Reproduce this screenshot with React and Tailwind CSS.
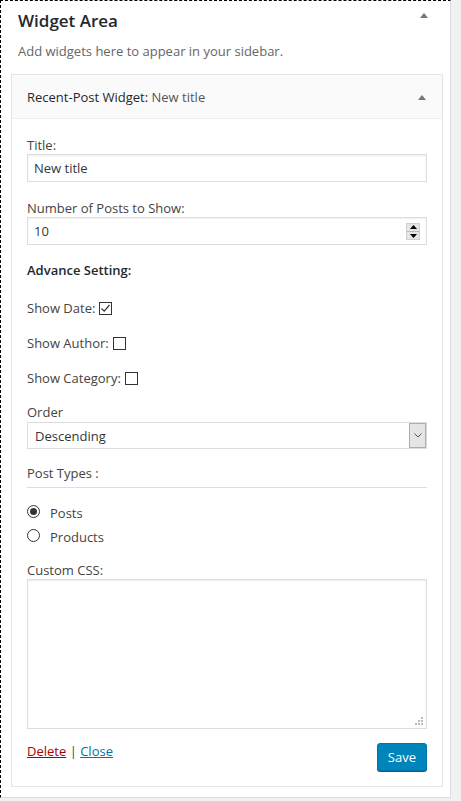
import React from 'react';

const font = { fontFamily: '"Open Sans", "Noto Sans", sans-serif' };

const UpArrow = ({ className }) => (
  <svg className={className} width="8" height="5" viewBox="0 0 8 5">
    <path d="M0 5 L4 0 L8 5 Z" fill="#72777c" />
  </svg>
);

const Check = ({ checked }) => (
  <span className="inline-flex w-[13px] h-[13px] border border-[#333] bg-white items-center justify-center">
    {checked && (
      <svg width="11" height="11" viewBox="0 0 11 11">
        <path d="M1.5 5.5 L4.2 8.2 L9.5 2" stroke="#333" strokeWidth="1.2" fill="none" />
      </svg>
    )}
  </span>
);

const Radio = ({ checked }) => (
  <span className="mt-[1px] inline-flex w-[13px] h-[13px] rounded-full border border-[#333] bg-white items-center justify-center">
    {checked && <span className="w-[7px] h-[7px] rounded-full bg-[#333]" />}
  </span>
);

const App = () => {
  return (
    <div
      className="w-[461px] h-[801px] bg-[#f1f1f1] text-[13px] text-[#444]"
      style={font}
    >
      {/* Sidebar panel */}
      <div className="w-[451px] h-[798px] bg-white border [border-style:dashed_solid_solid_dashed] [border-color:#000_#dcdcdc_#dcdcdc_#000] flex flex-col">
        <div className="flex justify-between pl-[17px] pr-[22px] pt-[8px]">
          <h2 className="text-[17px] font-semibold text-[#23282d] leading-[24px]">Widget Area</h2>
          <UpArrow className="mt-[4px]" />
        </div>
        <p className="pl-[17px] mt-[9px] text-[#666] leading-[18px]">
          Add widgets here to appear in your sidebar.
        </p>

        {/* Widget box */}
        <div className="ml-[10px] mr-[7px] mt-[14px] border border-[#e5e5e5] flex-1 flex flex-col">
          <div className="h-[44px] bg-[#fafafa] border-b border-[#eee] flex items-center justify-between pl-[15px] pr-[16px] pt-[3px]">
            <span className="text-[#23282d]">
              Recent-Post Widget: <span className="text-[#555]">New title</span>
            </span>
            <UpArrow className="mb-[2px]" />
          </div>

          <div className="px-[15px] pt-[17px] flex flex-col leading-[18px]">
            <label className="block">Title:</label>
            <div className="h-[28px] border border-[#ddd] bg-white flex items-center px-[6px] text-[#32373c] shadow-[inset_0_1px_2px_rgba(0,0,0,0.07)]">
              New title
            </div>

            <label className="block mt-[17px]">Number of Posts to Show:</label>
            <div className="h-[28px] border border-[#ddd] bg-white flex items-center justify-between pl-[6px] pr-[6px] text-[#32373c] shadow-[inset_0_1px_2px_rgba(0,0,0,0.07)]">
              <span>10</span>
              <span className="w-[14px] h-[17px] bg-[#e6e6e6] border border-[#d0d0d0] flex flex-col items-center justify-around">
                <svg width="7" height="4" viewBox="0 0 7 4"><path d="M0 4 L3.5 0 L7 4 Z" fill="#000" /></svg>
                <span className="w-full h-px bg-[#bbb]" />
                <svg width="7" height="4" viewBox="0 0 7 4"><path d="M0 0 L3.5 4 L7 0 Z" fill="#000" /></svg>
              </span>
            </div>

            <div className="mt-[16px] font-semibold text-[#23282d]">Advance Setting:</div>

            <div className="mt-[20px] flex items-center gap-[4px]">
              <span>Show Date:</span>
              <Check checked />
            </div>
            <div className="mt-[17px] flex items-center gap-[4px]">
              <span>Show Author:</span>
              <Check />
            </div>
            <div className="mt-[17px] flex items-center gap-[4px]">
              <span>Show Category:</span>
              <Check />
            </div>

            <label className="block mt-[16px]">Order</label>
            <div className="mt-[1px] h-[27px] border border-[#ddd] bg-white flex items-center justify-between pl-[7px] pr-0 text-[#32373c]">
              <span>Descending</span>
              <span className="w-[17px] h-[25px] bg-[#e5e5e5] border border-[#adadad] flex items-center justify-center">
                <svg width="8" height="5" viewBox="0 0 8 5">
                  <path d="M0.5 0.5 L4 4 L7.5 0.5" stroke="#555" strokeWidth="1" fill="none" />
                </svg>
              </span>
            </div>

            <div className="mt-[15px]">Post Types :</div>
            <div className="mt-[5px] h-[2px] border-t border-[#ddd]" />

            <div className="mt-[15px] h-[18px] flex items-start gap-[10px]">
              <Radio checked />
              <span>Posts</span>
            </div>
            <div className="mt-[6px] h-[18px] flex items-start gap-[10px]">
              <Radio />
              <span>Products</span>
            </div>

            <label className="block mt-[15px]">Custom CSS:</label>
            <div className="h-[150px] border border-[#ddd] bg-white shadow-[inset_0_1px_2px_rgba(0,0,0,0.07)] flex items-end justify-end p-[2px]">
              <svg width="9" height="9" viewBox="0 0 9 9">
                <rect x="6" y="0" width="2" height="2" fill="#bbb" />
                <rect x="3" y="3" width="2" height="2" fill="#bbb" />
                <rect x="6" y="3" width="2" height="2" fill="#bbb" />
                <rect x="0" y="6" width="2" height="2" fill="#bbb" />
                <rect x="3" y="6" width="2" height="2" fill="#bbb" />
                <rect x="6" y="6" width="2" height="2" fill="#bbb" />
              </svg>
            </div>

            <div className="mt-[14px] flex justify-between items-start">
              <div className="-mt-[1px]">
                <a className="text-[#a00] underline">Delete</a>
                <span className="text-[#444]"> | </span>
                <a className="text-[#0073aa] underline">Close</a>
              </div>
              <button className="h-[28px] px-[10px] bg-[#0085ba] border border-[#0073aa] rounded-[3px] text-white shadow-[0_1px_0_#006799] leading-[26px]">
                Save
              </button>
            </div>
          </div>
        </div>
        <div className="h-[10px]" />
      </div>
    </div>
  );
};

export default App;
